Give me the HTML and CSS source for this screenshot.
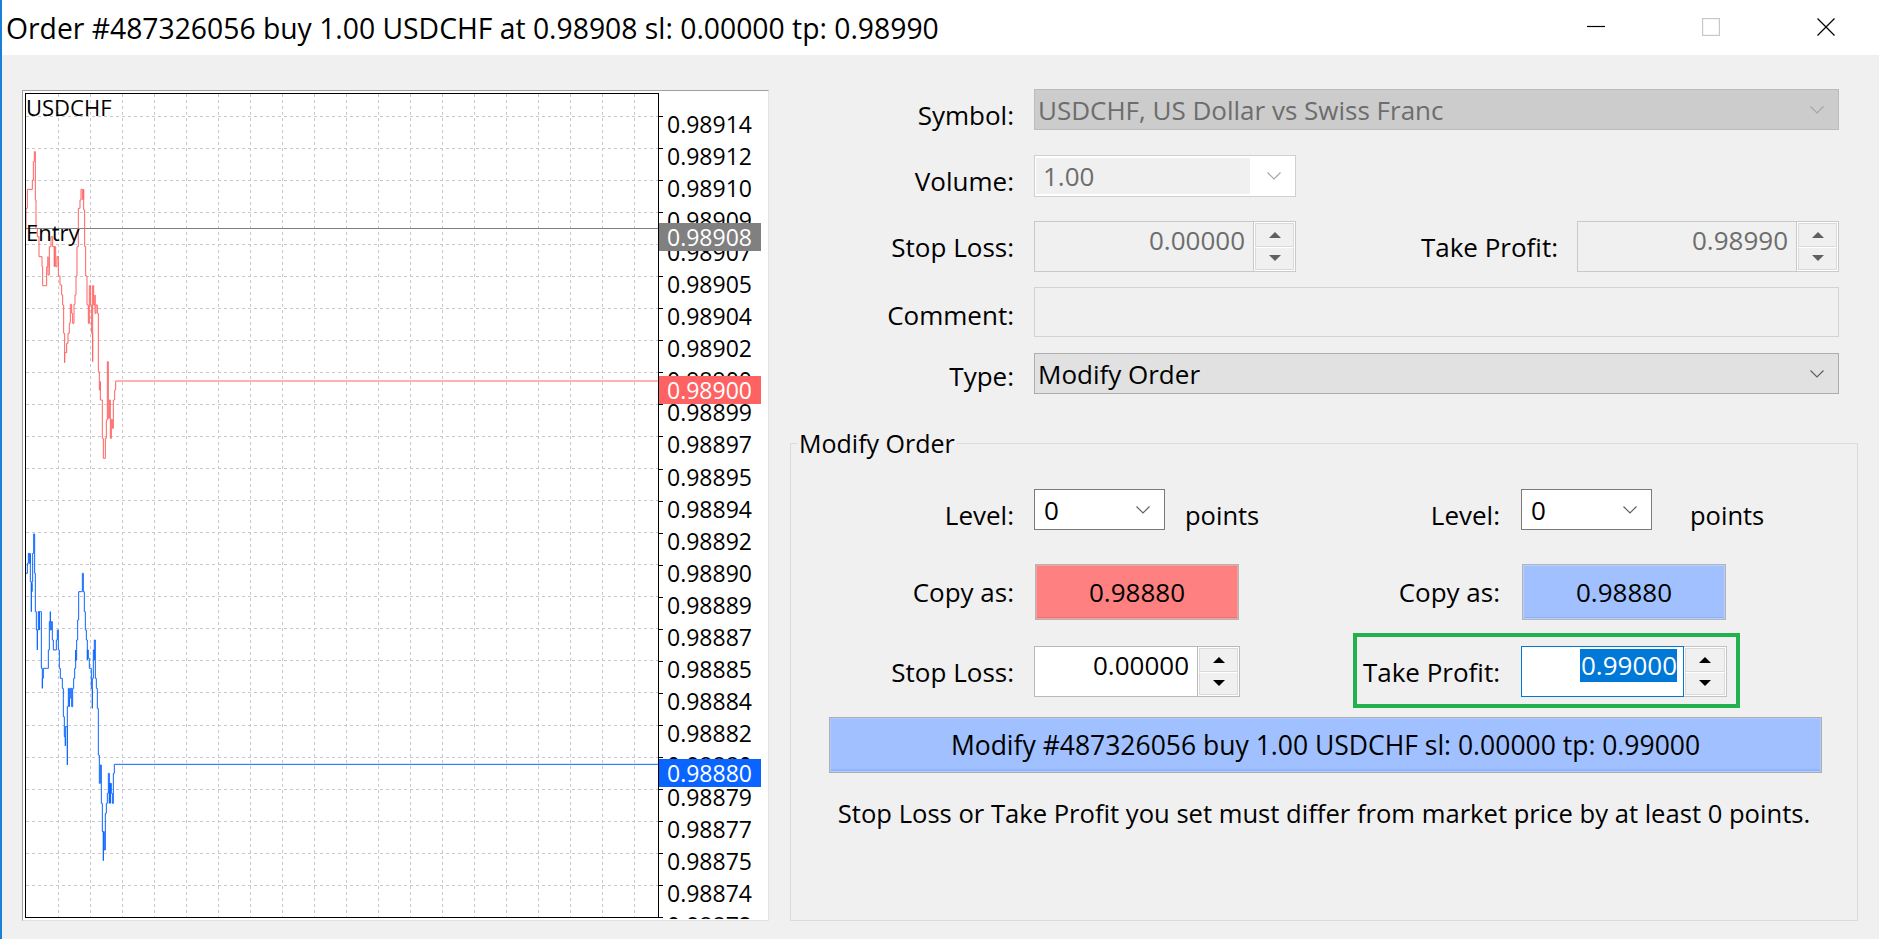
FILE: index.html
```html
<!DOCTYPE html>
<html>
<head>
<meta charset="utf-8">
<title>Order</title>
<link rel="stylesheet" href="styles.css">
</head>
<body>
<div class="window">
  <header class="titlebar">
    <div class="title">Order #487326056 buy 1.00 USDCHF at 0.98908 sl: 0.00000 tp: 0.98990</div>
    <div class="controls">
      <span class="ctl"><svg width="18" height="18" viewBox="0 0 18 18"><line x1="0" y1="8.5" x2="18" y2="8.5" stroke="#000" stroke-width="1.2"/></svg></span>
      <span class="ctl"><svg width="18" height="18" viewBox="0 0 18 18"><rect x="0.6" y="0.6" width="16.8" height="16.8" fill="none" stroke="#c8c8c8" stroke-width="1.2"/></svg></span>
      <span class="ctl"><svg width="18" height="18" viewBox="0 0 18 18"><path d="M0.5 0.5L17.5 17.5M17.5 0.5L0.5 17.5" stroke="#000" stroke-width="1.2"/></svg></span>
    </div>
  </header>

  <main class="body">
    <section class="chart-panel">
      <div class="plot">
        <svg class="plot-svg" width="632" height="823" viewBox="0 0 632 823">
          <path class="grid-h" d="M0 22.5H632M0 54.5H632M0 86.5H632M0 118.5H632M0 150.5H632M0 182.5H632M0 214.5H632M0 246.5H632M0 278.5H632M0 310.5H632M0 342.5H632M0 374.5H632M0 406.5H632M0 438.5H632M0 470.5H632M0 502.5H632M0 534.5H632M0 566.5H632M0 598.5H632M0 631.5H632M0 663.5H632M0 695.5H632M0 727.5H632M0 759.5H632M0 791.5H632"/>
          <path class="grid-v" d="M32.5 0V823M64.5 0V823M96.5 0V823M128.5 0V823M160.5 0V823M192.5 0V823M224.5 0V823M256.5 0V823M288.5 0V823M320.5 0V823M352.5 0V823M384.5 0V823M416.5 0V823M448.5 0V823M480.5 0V823M512.5 0V823M544.5 0V823M576.5 0V823M608.5 0V823"/>
          <line class="entry-line" x1="0" y1="134.5" x2="632" y2="134.5"/>
          <g transform="translate(-6 46) scale(0.33333)">
            <path class="ask" d="M18 270V205H22V148H37V120H40V65H43V35H46V180H48V265H52V290H57V350H66V380H68V437H80V380H84V350V405H88V320H93V290H98V320H103V380V320H107V380H111V350H115V408H120V435H125V465H128V495H131V580H134V668V638H140V610H144V580H148V550H151V493H155V520H158V550H162V493H165V465H168V408H171V320H175V205H180V180H183V148H187V178H191V148V210H194V320H197V408H201V495H205V550H208V437H212V495H215V580H218V665V437H221V495H225V465V520H228V495H232V520H235V695H238V750H241V725V780H247V895H250V955H256V895H259V840H262V665H265V835H268V780H271V895H274V838H277V865H280V780H284V750H287V723H1914"/>
          </g>
          <g transform="translate(-6 426) scale(0.33333)">
            <path class="bid" d="M18 160H22V130H25V100H28V130H31V100V185H34V275V190H36V215V185H38V100H41V42H44V160H46V275H49V330H52V390V330H55V275H58V330V275H61H64V445H67V505V475H70V445H82H85V390H88V305H91V275V330H94V305H97V330V360H100V390H109V360H112V330H115V360V390H118V445H121V475H127V505H130V535V590H133V650H136V678V620H142V735V560H145V505H148V560V535H151V505H155V560H158V505H161V475H164V445H167V390V420H170V360H173V300H176V215H184V215H187V160H190V215H193V275H196V330H199V360H202V420V390H205V415H208V445H214V505H217V565V475H220V390H223V420V360H226V475H229V505H232V565H235V705H238V790H241V735H244V850H247V935H250V1022V935H253V990H256V880H259V850H262V820H265V760H268V850V790H271V850V790H274V820H277V850H280V760H283V733H1914"/>
          </g>
        </svg>
        <div class="plot-symbol">USDCHF</div>
        <div class="plot-entry">Entry</div>
      </div>
      <div class="axis">
        <div class="axis-label">0.98914</div>
        <div class="axis-label">0.98912</div>
        <div class="axis-label">0.98910</div>
        <div class="axis-label">0.98909</div>
        <div class="axis-label">0.98907</div>
        <div class="axis-label">0.98905</div>
        <div class="axis-label">0.98904</div>
        <div class="axis-label">0.98902</div>
        <div class="axis-label">0.98900</div>
        <div class="axis-label">0.98899</div>
        <div class="axis-label">0.98897</div>
        <div class="axis-label">0.98895</div>
        <div class="axis-label">0.98894</div>
        <div class="axis-label">0.98892</div>
        <div class="axis-label">0.98890</div>
        <div class="axis-label">0.98889</div>
        <div class="axis-label">0.98887</div>
        <div class="axis-label">0.98885</div>
        <div class="axis-label">0.98884</div>
        <div class="axis-label">0.98882</div>
        <div class="axis-label">0.98880</div>
        <div class="axis-label">0.98879</div>
        <div class="axis-label">0.98877</div>
        <div class="axis-label">0.98875</div>
        <div class="axis-label">0.98874</div>
        <div class="axis-label">0.98872</div>
        <div class="tag tag-entry">0.98908</div>
        <div class="tag tag-ask">0.98900</div>
        <div class="tag tag-bid">0.98880</div>
      </div>
    </section>

    <section class="form">
      <div class="row row-symbol">
        <label class="lbl lbl-low">Symbol:</label>
        <div class="select select-disabled field-wide">
          <span class="select-text">USDCHF, US Dollar vs Swiss Franc</span>
          <svg class="chev" width="14" height="8" viewBox="0 0 14 8"><path d="M0.5 0.5L7 7L13.5 0.5" fill="none" stroke="#a6a6a6" stroke-width="1.2"/></svg>
        </div>
      </div>

      <div class="row row-volume">
        <label class="lbl lbl-low">Volume:</label>
        <div class="combo-vol">
          <span class="combo-vol-edit">1.00</span>
          <svg class="chev" width="14" height="8" viewBox="0 0 14 8"><path d="M0.5 0.5L7 7L13.5 0.5" fill="none" stroke="#a6a6a6" stroke-width="1.2"/></svg>
        </div>
      </div>

      <div class="row row-sltp">
        <label class="lbl">Stop Loss:</label>
        <div class="spin spin-disabled spin-top">
          <div class="spin-edit">0.00000</div>
          <div class="spin-btns">
            <span class="sb"><svg width="12" height="6" viewBox="0 0 12 6"><path d="M0 6L6 0L12 6Z" fill="#606060"/></svg></span>
            <span class="sb"><svg width="12" height="6" viewBox="0 0 12 6"><path d="M0 0L6 6L12 0Z" fill="#606060"/></svg></span>
          </div>
        </div>
        <label class="lbl lbl-tp">Take Profit:</label>
        <div class="spin spin-disabled spin-top">
          <div class="spin-edit">0.98990</div>
          <div class="spin-btns">
            <span class="sb"><svg width="12" height="6" viewBox="0 0 12 6"><path d="M0 6L6 0L12 6Z" fill="#606060"/></svg></span>
            <span class="sb"><svg width="12" height="6" viewBox="0 0 12 6"><path d="M0 0L6 6L12 0Z" fill="#606060"/></svg></span>
          </div>
        </div>
      </div>

      <div class="row row-comment">
        <label class="lbl lbl-mid">Comment:</label>
        <div class="edit-disabled field-wide"></div>
      </div>

      <div class="row row-type">
        <label class="lbl lbl-mid">Type:</label>
        <div class="select select-enabled field-wide">
          <span class="select-text">Modify Order</span>
          <svg class="chev" width="14" height="8" viewBox="0 0 14 8"><path d="M0.5 0.5L7 7L13.5 0.5" fill="none" stroke="#606060" stroke-width="1.2"/></svg>
        </div>
      </div>

      <fieldset class="group">
        <legend class="group-title">Modify Order</legend>

        <div class="grow grow-level">
          <label class="glbl lbl-low">Level:</label>
          <div class="gcell">
            <div class="level-combo">
              <span>0</span>
              <svg class="chev" width="14" height="8" viewBox="0 0 14 8"><path d="M0.5 0.5L7 7L13.5 0.5" fill="none" stroke="#606060" stroke-width="1.2"/></svg>
            </div>
            <span class="points lbl-low">points</span>
          </div>
          <label class="glbl2 lbl-low">Level:</label>
          <div class="gcell">
            <div class="level-combo">
              <span>0</span>
              <svg class="chev" width="14" height="8" viewBox="0 0 14 8"><path d="M0.5 0.5L7 7L13.5 0.5" fill="none" stroke="#606060" stroke-width="1.2"/></svg>
            </div>
            <span class="points points-right lbl-low">points</span>
          </div>
        </div>

        <div class="grow grow-copy">
          <label class="glbl">Copy as:</label>
          <div class="gcell">
            <div class="copy copy-red">0.98880</div>
          </div>
          <label class="glbl2">Copy as:</label>
          <div class="gcell">
            <div class="copy copy-blue">0.98880</div>
          </div>
        </div>

        <div class="grow grow-sltp">
          <label class="glbl">Stop Loss:</label>
          <div class="gcell">
            <div class="spin spin-enabled spin-group">
              <div class="spin-edit">0.00000</div>
              <div class="spin-btns">
                <span class="sb"><svg width="12" height="6" viewBox="0 0 12 6"><path d="M0 6L6 0L12 6Z" fill="#000"/></svg></span>
                <span class="sb"><svg width="12" height="6" viewBox="0 0 12 6"><path d="M0 0L6 6L12 0Z" fill="#000"/></svg></span>
              </div>
            </div>
          </div>
          <label class="glbl2">Take Profit:</label>
          <div class="gcell">
            <div class="spin spin-focus spin-group">
              <div class="spin-edit"><span class="sel">0.99000</span></div>
              <div class="spin-btns">
                <span class="sb"><svg width="12" height="6" viewBox="0 0 12 6"><path d="M0 6L6 0L12 6Z" fill="#000"/></svg></span>
                <span class="sb"><svg width="12" height="6" viewBox="0 0 12 6"><path d="M0 0L6 6L12 0Z" fill="#000"/></svg></span>
              </div>
            </div>
          </div>
          <div class="highlight"></div>
        </div>

        <div class="modify-btn">Modify #487326056 buy 1.00 USDCHF sl: 0.00000 tp: 0.99000</div>

        <p class="warning">Stop Loss or Take Profit you set must differ from market price by at least 0 points.</p>
      </fieldset>
    </section>
  </main>
</div>
</body>
</html>
```

FILE: styles.css
```css
* { box-sizing: border-box; }
html, body { margin: 0; padding: 0; }
body {
  width: 1879px;
  height: 939px;
  overflow: hidden;
  background: #f0f0f0;
  font-family: "Open Sans", "Noto Sans", sans-serif;
  color: #000;
}
.window {
  width: 1879px;
  height: 939px;
  border-left: 2px solid #1a7fd6;
  background: #f0f0f0;
  overflow: hidden;
}

/* title bar */
.titlebar {
  height: 55px;
  background: #fff;
  display: flex;
  align-items: center;
}
.title {
  flex: 1;
  padding-left: 4px;
  font-size: 28.3px;
  white-space: nowrap;
}
.controls { display: flex; margin-right: -4px; }
.ctl {
  width: 115px;
  height: 55px;
  display: flex;
  align-items: center;
  justify-content: center;
}
.ctl svg { display: block; margin-top: -2px; }

.body { display: flex; align-items: flex-start; }

/* chart */
.chart-panel {
  margin: 35px 0 0 20px;
  width: 747px;
  height: 831px;
  border: 1px solid;
  border-color: #a0a0a0 #e3e3e3 #e3e3e3 #a0a0a0;
  background: #fff;
  padding: 2px;
  display: flex;
  flex: none;
}
.plot {
  position: relative;
  width: 634px;
  height: 825px;
  border: 1px solid #000;
  flex: none;
  overflow: hidden;
}
.plot-svg { display: block; }
.grid-h, .grid-v {
  fill: none;
  stroke: #c8c8c8;
  stroke-width: 1;
  stroke-dasharray: 3 3;
}
.entry-line { stroke: #808080; stroke-width: 1; }
.ask, .bid {
  fill: none;
  stroke-width: 3;
}
.ask { stroke: #ff6262; }
.bid { stroke: #0a64ff; }
.plot-symbol, .plot-entry {
  position: absolute;
  left: 0;
  font-size: 22px;
  line-height: 22px;
}
.plot-symbol { top: 2px; }
.plot-entry { top: 127px; }

.axis {
  position: relative;
  width: 108px;
  height: 826px;
  overflow: hidden;
  padding-top: 20px;
  font-size: 23px;
  line-height: 23px;
  flex: none;
  background: repeating-linear-gradient(to bottom, transparent 0 23px, #000 23px 24px, transparent 24px 32.05px) left top / 4px 100% no-repeat;
}
.axis-label {
  height: 32.05px;
  padding-left: 8px;
  white-space: nowrap;
}
.tag {
  position: absolute;
  left: 0;
  width: 102px;
  height: 28px;
  padding: 3px 0 0 8px;
  color: #fff;
  line-height: 23px;
}
.tag-entry { top: 130px; background: #808080; }
.tag-ask { top: 283px; background: #ff6262; }
.tag-bid { top: 666px; background: #0a64ff; }

/* form */
.form {
  margin: 34px 0 0 21px;
  width: 1068px;
  flex: none;
  font-size: 26px;
}
.row { display: flex; align-items: center; }
.lbl {
  width: 224px;
  margin-right: 20px;
  text-align: right;
  flex: none;
  line-height: 34px;
  white-space: nowrap;
}
.lbl-low { padding-top: 10px; }
.lbl-mid { padding-top: 5px; }
.lbl-tp { width: 262px; margin-right: 19px; }

.row-symbol { height: 41px; }
.row-volume { height: 42px; margin-top: 25px; }
.row-sltp { height: 51px; margin-top: 24px; }
.row-comment { height: 50px; margin-top: 15px; }
.row-type { height: 41px; margin-top: 16px; }

.field-wide { width: 805px; height: 100%; }

.select {
  display: flex;
  align-items: center;
  justify-content: space-between;
  padding: 0 14px 0 3px;
  border: 1px solid;
}
.select-disabled { background: #cccccc; border-color: #bcbcbc; color: #6d6d6d; }
.select-enabled { background: #e1e1e1; border-color: #adadad; }
.select-text { line-height: 34px; white-space: nowrap; }
.chev { display: block; flex: none; }

.combo-vol {
  width: 262px;
  height: 100%;
  border: 1px solid #d0d0d0;
  background: #fff;
  display: flex;
  align-items: center;
  padding: 2px 14px 2px 1px;
}
.combo-vol-edit {
  width: 214px;
  height: 100%;
  background: #f0f0f0;
  color: #6d6d6d;
  padding-left: 7px;
  line-height: 34px;
  display: flex;
  align-items: center;
  margin-right: auto;
}

.edit-disabled {
  background: #f0f0f0;
  border: 1px solid #d3d3d3;
}

/* spin */
.spin { display: flex; height: 100%; flex: none; }
.spin-top { width: 262px; }
.spin-group { width: 206px; height: 51px; }
.spin-edit {
  flex: 1;
  border: 1px solid #c9c9c9;
  border-right: none;
  text-align: right;
  padding: 2px 8px 0 0;
  line-height: 33px;
  white-space: nowrap;
}
.spin-btns {
  width: 43px;
  flex: none;
  display: flex;
  flex-direction: column;
  border: 1px solid #c9c9c9;
  background: #fff;
  padding: 1px;
}
.sb {
  flex: 1;
  display: flex;
  align-items: center;
  justify-content: center;
  background: #f0f0f0;
  border: 1px solid #dadada;
}
.sb + .sb { border-top-color: #fff; }
.sb svg { display: block; }
.spin-disabled .spin-edit { background: #f0f0f0; color: #6d6d6d; }
.spin-enabled .spin-edit { background: #fff; border-color: #b9b9b9; }
.spin-enabled .spin-btns { border-color: #b9b9b9; }
.spin-focus .spin-edit { background: #fff; border: 1px solid #0078d7; padding-right: 6px; }
.spin-focus .spin-btns { border-color: #c3c3c3; border-left: none; }
.sel { background: #0078d7; color: #fff; display: inline-block; padding-left: 1px; }

/* group */
.group {
  margin: 32px 0 0 0;
  padding: 0;
  border: 1px solid #dcdcdc;
  height: 495px;
  min-width: 0;
}
.group-title {
  margin-left: 6px;
  padding: 0 2px;
  line-height: 34px;
  font-size: 25px;
}
.grow { display: flex; align-items: center; }
.glbl, .glbl2 {
  flex: none;
  text-align: right;
  line-height: 34px;
  white-space: nowrap;
}
.glbl { width: 223px; margin-right: 20px; }
.glbl2 { width: 260px; margin-right: 21px; }
.gcell { width: 206px; flex: none; display: flex; align-items: center; height: 100%; }

.grow-level { height: 41px; margin-top: 29px; }
.grow-copy { height: 56px; margin-top: 34px; }
.grow-sltp { height: 51px; margin-top: 26px; position: relative; }

.level-combo {
  width: 131px;
  height: 41px;
  flex: none;
  background: #fff;
  border: 1px solid #7a7a7a;
  display: flex;
  align-items: center;
  justify-content: space-between;
  padding: 0 14px 0 9px;
  line-height: 34px;
}
.points { flex: none; margin-left: 20px; line-height: 34px; white-space: nowrap; font-size: 25.5px; }
.points-right { margin-left: 38px; }

.copy {
  width: 204px;
  height: 56px;
  margin-left: 1px;
  flex: none;
  border: 1px solid #b4b4b4;
  display: flex;
  align-items: center;
  justify-content: center;
}
.copy-red { background: #ff8080; box-shadow: inset 0 0 0 1px #f3a0a0, inset 0 -2px 0 #f07070; }
.copy-blue { background: #a0c0ff; box-shadow: inset 0 0 0 1px #b6cfff, inset 0 -2px 0 #8eb2fa; }

.highlight {
  position: absolute;
  left: 562px;
  top: -13px;
  width: 387px;
  height: 75px;
  border: 4px solid #22b14c;
  pointer-events: none;
}

.modify-btn {
  margin: 20px 0 0 38px;
  width: 993px;
  height: 56px;
  border: 1px solid #adadad;
  background: #a0c0ff;
  box-shadow: inset 0 0 0 1px #b0cbff, inset 0 -3px 0 #90b4f8;
  display: flex;
  align-items: center;
  justify-content: center;
  white-space: nowrap;
  font-size: 26.5px;
}

.warning {
  margin: 24px 0 0 0;
  text-align: center;
  line-height: 34px;
  white-space: nowrap;
  font-size: 25.6px;
}
```
